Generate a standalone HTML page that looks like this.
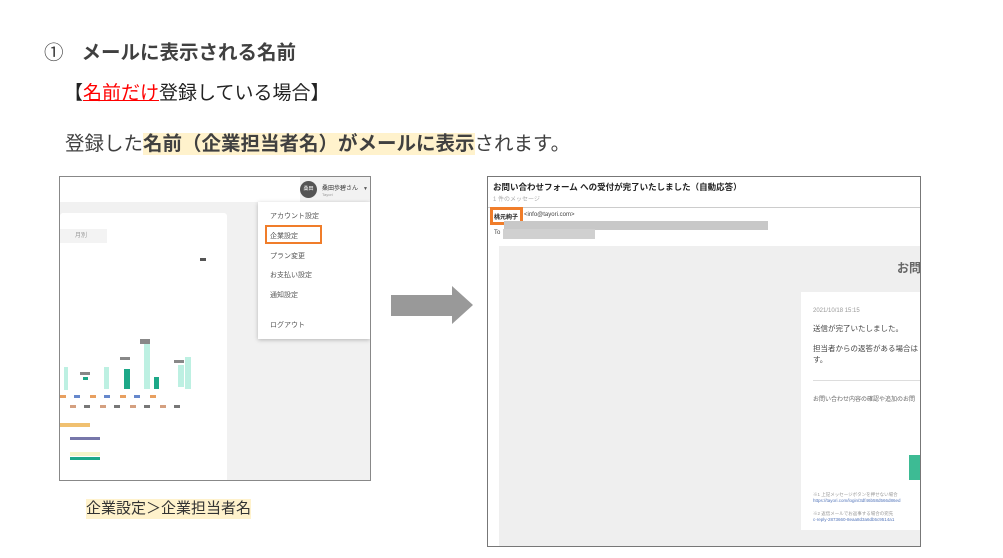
<!DOCTYPE html>
<html><head><meta charset="utf-8"><style>
body{margin:0;width:1003px;height:558px;background:#fff;position:relative;overflow:hidden;font-family:"Liberation Sans","Noto Sans CJK JP",sans-serif;color:#404040}
.a{position:absolute;white-space:nowrap}
</style></head><body>
<div class="a" style="left:44px;top:41px;font-size:19.5px;line-height:24px">①<b style="margin-left:18px">メールに表示される名前</b></div>
<div class="a" style="left:64px;top:82px;font-size:19px;line-height:24px;color:#222">【<span style="color:#f00;text-decoration:underline">名前だけ</span>登録している場合】</div>
<div class="a" style="left:65px;top:132px;font-size:19.5px;line-height:24px;color:#404040">登録した<b style="background:#fff2cc">名前（企業担当者名）がメールに表示</b>されます。</div>

<!-- left screenshot -->
<div class="a" style="left:59px;top:176px;width:310px;height:303px;border:1px solid #888;background:#f1f1f1;overflow:hidden">
 <div class="a" style="left:0;top:0;width:310px;height:25px;background:#fff"></div>
 <div class="a" style="left:240px;top:0;width:70px;height:25px;background:#f2f2f2"></div>
 <div class="a" style="left:240px;top:4px;width:17px;height:17px;border-radius:50%;background:#555;color:#fff;font-size:5px;line-height:17px;text-align:center">桑田</div>
 <div class="a" style="left:262px;top:6px;font-size:6px;color:#333">桑田歩碧さん</div>
 <div class="a" style="left:262px;top:15px;font-size:4px;color:#999">Tayori</div>
 <div class="a" style="left:303px;top:9px;font-size:5px;color:#555">▼</div>
 <div class="a" style="left:0;top:36px;width:167px;height:270px;background:#fff;border-radius:3px"></div>
 <div class="a" style="left:0;top:52px;width:47px;height:14px;background:#f3f3f3;font-size:6px;color:#999;line-height:14px;text-align:right;padding-right:20px;box-sizing:border-box">月別</div>
 <div class="a" style="left:4px;top:190px;width:4px;height:23px;background:#bdf0e2"></div>
 <div class="a" style="left:23px;top:200px;width:5px;height:3px;background:#1da888"></div>
 <div class="a" style="left:64px;top:192px;width:6px;height:20px;background:#1da888"></div>
 <div class="a" style="left:84px;top:166px;width:6px;height:46px;background:#bdf0e2"></div>
 <div class="a" style="left:125px;top:180px;width:6px;height:32px;background:#bdf0e2"></div>
 <div class="a" style="left:118px;top:188px;width:6px;height:22px;background:#bdf0e2"></div>
 <div class="a" style="left:44px;top:190px;width:5px;height:22px;background:#bdf0e2"></div>
 <div class="a" style="left:94px;top:200px;width:5px;height:12px;background:#1da888"></div>
 <div class="a" style="left:20px;top:195px;width:10px;height:3px;background:#888"></div>
 <div class="a" style="left:60px;top:180px;width:10px;height:3px;background:#888"></div>
 <div class="a" style="left:80px;top:162px;width:10px;height:5px;background:#888"></div>
 <div class="a" style="left:114px;top:183px;width:10px;height:3px;background:#888"></div>
 <div class="a" style="left:0;top:218px;width:100px;height:3px;background:repeating-linear-gradient(90deg,#e8a060 0 6px,transparent 6px 14px,#6688cc 14px 20px,transparent 20px 30px)"></div>
 <div class="a" style="left:10px;top:228px;width:120px;height:3px;background:repeating-linear-gradient(90deg,#d4a080 0 6px,transparent 6px 14px,#777 14px 20px,transparent 20px 30px)"></div>
 <div class="a" style="left:0;top:246px;width:30px;height:4px;background:#f0c070"></div>
 <div class="a" style="left:140px;top:81px;width:6px;height:3px;background:#555"></div>
 <div class="a" style="left:10px;top:260px;width:30px;height:3px;background:#7777aa"></div>
 <div class="a" style="left:10px;top:275px;width:30px;height:4px;background:#f5f5c8"></div>
 <div class="a" style="left:10px;top:280px;width:30px;height:3px;background:#1da888"></div>
 <div class="a" style="left:198px;top:25px;width:112px;height:137px;background:#fff;box-shadow:0 1px 4px rgba(0,0,0,.25)"></div>
 <div class="a" style="left:210px;top:35px;font-size:7px;line-height:9px;color:#555">アカウント設定</div>
 <div class="a" style="left:205px;top:48px;width:57px;height:19px;border:2px solid #f07d2a;box-sizing:border-box"></div>
 <div class="a" style="left:210px;top:55px;font-size:7px;line-height:9px;color:#555">企業設定</div>
 <div class="a" style="left:210px;top:75px;font-size:7px;line-height:9px;color:#555">プラン変更</div>
 <div class="a" style="left:210px;top:94px;font-size:7px;line-height:9px;color:#555">お支払い設定</div>
 <div class="a" style="left:210px;top:114px;font-size:7px;line-height:9px;color:#555">通知設定</div>
 <div class="a" style="left:210px;top:144px;font-size:7px;line-height:9px;color:#555">ログアウト</div>
</div>

<!-- arrow -->
<svg class="a" style="left:380px;top:280px" width="100" height="50"><polygon points="11,15 72,15 72,6 93,25 72,44 72,36 11,36" fill="#999"/></svg>

<!-- right screenshot -->
<div class="a" style="left:487px;top:176px;width:432px;height:369px;border:1px solid #777;background:#fff;overflow:hidden">
 <div class="a" style="left:5px;top:4px;font-size:8.5px;font-weight:bold;color:#222">お問い合わせフォーム への受付が完了いたしました（自動応答）</div>
 <div class="a" style="left:5px;top:17px;font-size:6px;color:#aaa">1 件のメッセージ</div>
 <div class="a" style="left:0;top:30px;width:432px;height:1px;background:#ccc"></div>
 <div class="a" style="left:2px;top:30px;width:33px;height:18px;border:3px solid #f07d2a;box-sizing:border-box"></div>
 <div class="a" style="left:6px;top:35px;font-size:6px;font-weight:bold;color:#222">桃元絢子</div>
 <div class="a" style="left:36px;top:35px;font-size:6px;color:#444">&lt;info@tayori.com&gt;</div>
 <div class="a" style="left:16px;top:44px;width:264px;height:9px;background:#c8c8c8"></div>
 <div class="a" style="left:6px;top:53px;font-size:6px;color:#444">To</div>
 <div class="a" style="left:15px;top:52px;width:92px;height:10px;background:#d0d0d0"></div>
 <div class="a" style="left:11px;top:69px;width:421px;height:300px;background:#efefef"></div>
 <div class="a" style="left:409px;top:82px;font-size:12px;font-weight:bold;color:#666">お問</div>
 <div class="a" style="left:313px;top:115px;width:119px;height:238px;background:#fff"></div>
 <div class="a" style="left:325px;top:131px;font-size:6px;color:#999">2021/10/18 15:15</div>
 <div class="a" style="left:325px;top:146px;font-size:7.5px;color:#444">送信が完了いたしました。</div>
 <div class="a" style="left:325px;top:166px;font-size:7.5px;line-height:11px;color:#444">担当者からの返答がある場合は<br>す。</div>
 <div class="a" style="left:325px;top:203px;width:107px;height:1px;background:#ddd"></div>
 <div class="a" style="left:325px;top:217px;font-size:6px;color:#666">お問い合わせ内容の確認や追加のお問</div>
 <div class="a" style="left:421px;top:278px;width:11px;height:25px;background:#3dbb94"></div>
 <div class="a" style="left:325px;top:315px;font-size:4.5px;color:#999">※1 上記メッセージボタンを押せない場合</div>
 <div class="a" style="left:325px;top:321px;font-size:4.5px;color:#5577bb">https://tayori.com/login/3df46b58d566d86ed</div>
 <div class="a" style="left:325px;top:334px;font-size:4.5px;color:#999">※2 返信メールでお返事する場合の宛先</div>
 <div class="a" style="left:325px;top:340px;font-size:4.5px;color:#5577bb">c-reply-2873660-8eaa8d3a6db5c9514a1</div>
</div>

<div class="a" style="left:86px;top:499px;font-size:15px;line-height:20px;background:#fff2cc;color:#333">企業設定＞企業担当者名</div>
</body></html>
